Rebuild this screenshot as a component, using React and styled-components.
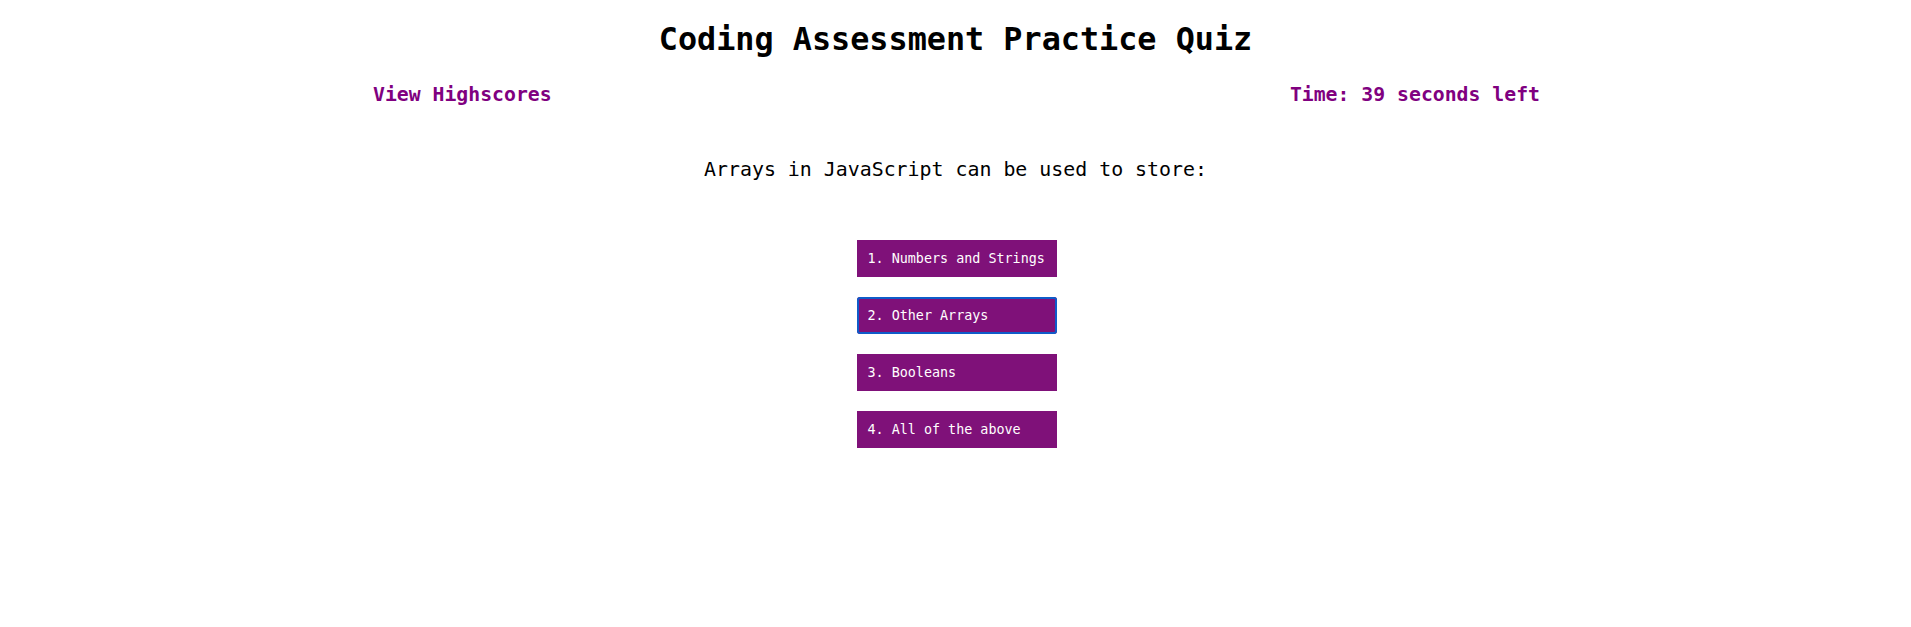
import React from 'react';
import styled, { createGlobalStyle } from 'styled-components';

const GlobalStyle = createGlobalStyle`
  body {
    margin: 0;
    background: #ffffff;
    font-family: "DejaVu Sans Mono", "Liberation Mono", monospace;
  }
`;

const Page = styled.div`
  display: flex;
  flex-direction: column;
  align-items: center;
`;

const Title = styled.h1`
  margin: 20px 0 0;
  font-size: 31.8px;
  line-height: 38px;
  font-weight: bold;
  color: #000;
`;

const Header = styled.div`
  width: 1167px;
  display: flex;
  justify-content: space-between;
  margin-top: 25px;
  padding-left: 2px;
`;

const HeaderText = styled.span`
  font-size: 19.8px;
  line-height: 24px;
  font-weight: bold;
  color: #800080;
`;

const Question = styled.p`
  margin: 51px 0 0;
  font-size: 19.9px;
  line-height: 24px;
  color: #000;
`;

const Choices = styled.div`
  display: flex;
  flex-direction: column;
  gap: 20px;
  margin-top: 58px;
  padding-left: 2px;
`;

const ChoiceButton = styled.button`
  box-sizing: border-box;
  width: 200px;
  height: 37px;
  padding: 0 11px;
  text-align: left;
  font-family: inherit;
  font-size: 13.4px;
  color: #ffffff;
  background: #7f1179;
  border: 0;
  border-radius: ${p => (p.$focused ? '3px' : '0')};
  box-shadow: ${p => (p.$focused ? 'inset 0 0 0 2px #0f5bc9' : 'none')};
  cursor: pointer;
`;

const choices = [
  '1. Numbers and Strings',
  '2. Other Arrays',
  '3. Booleans',
  '4. All of the above',
];

export default function App() {
  return (
    <Page>
      <GlobalStyle />
      <Title>Coding Assessment Practice Quiz</Title>
      <Header>
        <HeaderText>View Highscores</HeaderText>
        <HeaderText>Time: 39 seconds left</HeaderText>
      </Header>
      <Question>Arrays in JavaScript can be used to store:</Question>
      <Choices>
        {choices.map((c, i) => (
          <ChoiceButton key={c} $focused={i === 1}>{c}</ChoiceButton>
        ))}
      </Choices>
    </Page>
  );
}
